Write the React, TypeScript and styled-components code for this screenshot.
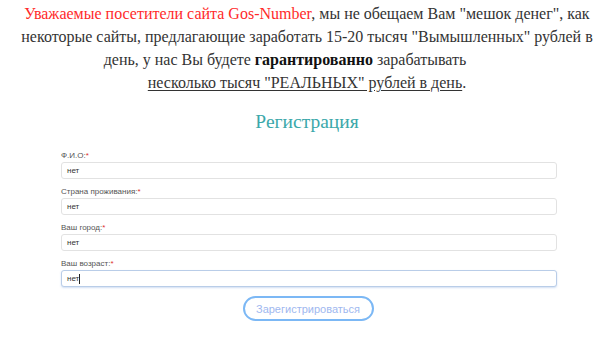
import styled, { createGlobalStyle } from 'styled-components';

const GlobalStyle = createGlobalStyle`
    body {
        margin: 0;
        background: #ffffff;
    }
`;

const fields = [
    { label: 'Ф.И.О:', value: 'нет' },
    { label: 'Страна проживания:', value: 'нет' },
    { label: 'Ваш город:', value: 'нет' },
    { label: 'Ваш возраст:', value: 'нет', focused: true },
];

export default function App() {
    return (
        <>
            <GlobalStyle />
            <Page>
                <Intro>
                    <Red>Уважаемые посетители сайта Gos-Number</Red>, мы не обещаем Вам "мешок денег", как
                    <br />
                    некоторые сайты, предлагающие заработать 15-20 тысяч "Вымышленных" рублей в
                    <br />
                    день, у нас Вы будете <b>гарантированно</b> зарабатывать<Trail />
                    <br />
                    <u>несколько тысяч "РЕАЛЬНЫХ" рублей в день</u>.
                </Intro>
                <Title>Регистрация</Title>
                <Form>
                    {fields.map(f => (
                        <Field key={f.label}>
                            <Label>
                                {f.label}<Star>*</Star>
                            </Label>
                            <Input focused={f.focused}>
                                {f.value}
                                {f.focused && <Caret />}
                            </Input>
                        </Field>
                    ))}
                    <ButtonRow>
                        <Submit>Зарегистрироваться</Submit>
                    </ButtonRow>
                </Form>
            </Page>
        </>
    );
}

const Page = styled.div`
    width: 614px;
    height: 346px;
    overflow: hidden;
    padding-top: 2px;
    box-sizing: border-box;
`;

const Intro = styled.p`
    margin: 0;
    font-family: 'Liberation Serif', 'DejaVu Serif', serif;
    font-size: 16px;
    line-height: 23px;
    color: #333333;
    text-align: center;
    white-space: nowrap;
    b {
        color: #111;
    }
    u {
        text-underline-offset: 2px;
    }
`;

// the third line sits left of centre in the original, as if something trails it
const Trail = styled.span`
    display: inline-block;
    width: 44px;
`;

const Red = styled.span`
    color: #ff2a2a;
`;

const Title = styled.h2`
    margin: 16px 0 0;
    font-family: 'Liberation Serif', 'DejaVu Serif', serif;
    font-weight: 400;
    font-size: 19.5px;
    line-height: 24px;
    color: #3ba8aa;
    text-align: center;
`;

const Form = styled.div`
    width: 496px;
    margin: 16px 0 0 61px;
    display: flex;
    flex-direction: column;
    gap: 7px;
`;

const Field = styled.div`
    display: flex;
    flex-direction: column;
    gap: 1px;
`;

const Label = styled.div`
    font-family: 'Liberation Sans', Arial, sans-serif;
    font-size: 8px;
    line-height: 11px;
    color: #555555;
`;

const Star = styled.span`
    color: #e03030;
`;

const Input = styled.div<{ focused?: boolean }>`
    height: 17px;
    box-sizing: border-box;
    border: 1px solid ${({ focused }) => (focused ? '#b9cde8' : '#e2e2e2')};
    box-shadow: ${({ focused }) => (focused ? '0 1px 2px rgba(120,160,220,0.35)' : 'none')};
    border-radius: 3px;
    padding: 0 5px;
    display: flex;
    align-items: center;
    font-family: 'Liberation Sans', Arial, sans-serif;
    font-size: 8px;
    color: #333333;
    background: #ffffff;
`;

const Caret = styled.span`
    display: inline-block;
    width: 1px;
    height: 10px;
    background: #222;
`;

const ButtonRow = styled.div`
    display: flex;
    justify-content: center;
    margin-top: 2px;
`;

const Submit = styled.button`
    width: 131px;
    height: 25px;
    border: 2px solid #7cb8f5;
    border-radius: 13px;
    background: #ffffff;
    color: #a0b8ef;
    font-family: 'Liberation Sans', Arial, sans-serif;
    font-size: 11px;
    padding: 0;
    margin-left: -2px;
`;
